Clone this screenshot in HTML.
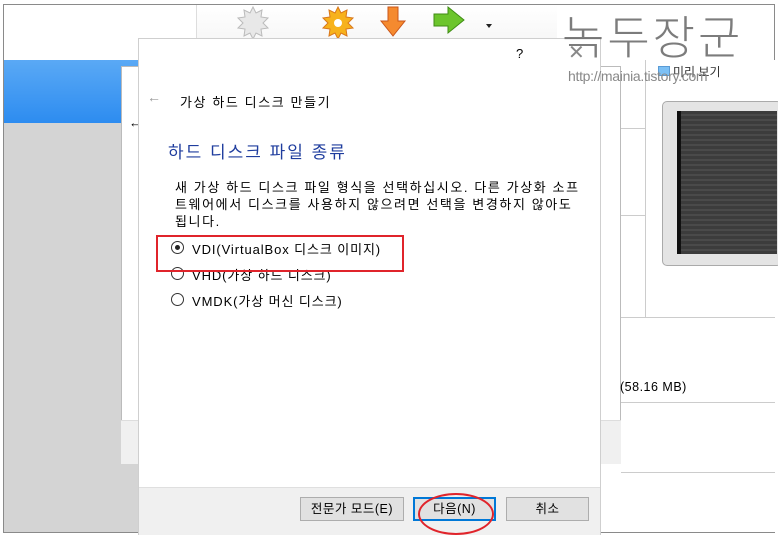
<!DOCTYPE html>
<html><head><meta charset="utf-8"><style>
*{margin:0;padding:0;box-sizing:border-box}
body{width:778px;height:539px;background:#fff;position:relative;overflow:hidden;font-family:"Liberation Sans","Noto Sans CJK KR","NanumGothic",sans-serif;color:#000}
.a{position:absolute}
.t{font-size:12.5px;white-space:nowrap}
.btn{position:absolute;height:24px;border:1px solid #adadad;background:#e1e1e1;font-size:12.5px;text-align:center;line-height:22px;letter-spacing:.5px}
.radio{position:absolute;width:13px;height:13px;border:1px solid #333;border-radius:50%;background:#fff}
</style></head><body>
<div class="a" style="left:3px;top:4px;width:772px;height:529px;border:1px solid #8a8a8a"></div>
<div class="a" style="left:196px;top:5px;width:1px;height:55px;background:#ddd"></div>
<div class="a" style="left:197px;top:5px;width:360px;height:55px;background:linear-gradient(#fff,#f2f2f2)"></div>
<svg class="a" style="left:235px;top:5px" width="36" height="36"><polygon points="18,2 21,8 27,5 26,12 33,13 28,18 33,23 26,24 27,31 21,28 18,34 15,28 9,31 10,24 3,23 8,18 3,13 10,12 9,5 15,8" fill="#e8e8e8" stroke="#bbb"/></svg>
<svg class="a" style="left:320px;top:5px" width="36" height="36"><polygon points="18,2 21,8 27,5 26,12 33,13 28,18 33,23 26,24 27,31 21,28 18,34 15,28 9,31 10,24 3,23 8,18 3,13 10,12 9,5 15,8" fill="#f7b21c" stroke="#d9771a"/><circle cx="18" cy="18" r="4" fill="#fff"/></svg>
<svg class="a" style="left:378px;top:5px" width="30" height="33"><path d="M10 2h10v14h7L15 31 3 16h7z" fill="#f58a2f" stroke="#c9551a"/></svg>
<svg class="a" style="left:432px;top:5px" width="36" height="30"><path d="M2 9h14V2l16 13-16 13v-7H2z" fill="#6cc52c" stroke="#3f8c14"/></svg>
<div class="a" style="left:486px;top:24px;border:3px solid transparent;border-top:4px solid #222"></div>
<div class="a" style="left:4px;top:60px;width:134px;height:63px;background:linear-gradient(#5aa9f5,#2d8cf0)"></div>
<div class="a" style="left:4px;top:123px;width:134px;height:409px;background:#d4d4d4"></div>
<div class="a" style="left:121px;top:66px;width:500px;height:398px;background:#fff;border:1px solid #bbb"></div>
<div class="a" style="left:121px;top:420px;width:500px;height:44px;background:#f0f0f0;border-top:1px solid #ddd"></div>
<div class="a t" style="left:129px;top:115px;font-size:13px">←</div>
<div class="a" style="left:621px;top:60px;width:154px;height:472px;background:#fff"></div>
<div class="a" style="left:645px;top:60px;width:1px;height:257px;background:#ccc"></div>
<div class="a" style="left:621px;top:128px;width:24px;height:1px;background:#ccc"></div>
<div class="a" style="left:621px;top:215px;width:24px;height:1px;background:#ccc"></div>
<div class="a" style="left:621px;top:317px;width:154px;height:1px;background:#ccc"></div>
<div class="a" style="left:621px;top:402px;width:154px;height:1px;background:#ccc"></div>
<div class="a" style="left:621px;top:472px;width:154px;height:1px;background:#ccc"></div>
<div class="a" style="left:662px;top:101px;width:120px;height:165px;background:#e4e4e4;border:1px solid #aaa;border-radius:5px"></div>
<div class="a" style="left:677px;top:111px;width:100px;height:143px;background:repeating-linear-gradient(#3c3c3c 0,#3c3c3c 3px,#4a4a4a 3px,#4a4a4a 5px);border-left:4px solid #111"></div>
<div class="a" style="left:658px;top:66px;width:12px;height:10px;background:#7cc0f5;border:1px solid #5a9bd5"></div>
<div class="a t" style="left:673px;top:63px;font-size:12px;color:#333">미리 보기</div>
<div class="a t" style="left:620px;top:380px;font-size:12.5px;letter-spacing:.5px">(58.16 MB)</div>
<!-- main dialog -->
<div class="a" style="left:138px;top:38px;width:463px;height:497px;background:#fff;border:1px solid #cfcfcf"></div>
<div class="a" style="left:139px;top:487px;width:461px;height:48px;background:#f0f0f0;border-top:1px solid #dfdfdf"></div>
<div class="a t" style="left:516px;top:46px;font-size:13px">?</div>
<div class="a t" style="left:147px;top:89px;color:#999;font-size:14px">←</div>
<div class="a t" style="left:180px;top:92px;font-size:13px;letter-spacing:1.6px">가상 하드 디스크 만들기</div>
<div class="a t" style="left:168px;top:138px;font-size:17px;color:#1f3d9e;letter-spacing:2px">하드 디스크 파일 종류</div>
<div class="a" style="left:175px;top:179px;font-size:13px;line-height:17px;width:430px;letter-spacing:1.6px;white-space:nowrap">새 가상 하드 디스크 파일 형식을 선택하십시오. 다른 가상화 소프<br>트웨어에서 디스크를 사용하지 않으려면 선택을 변경하지 않아도<br>됩니다.</div>
<div class="radio" style="left:171px;top:241px"></div><div class="a" style="left:175px;top:245px;width:5px;height:5px;border-radius:50%;background:#222"></div>
<div class="a t" style="left:192px;top:239px;font-size:13px;letter-spacing:.9px">VDI(VirtualBox 디스크 이미지)</div>
<div class="radio" style="left:171px;top:267px"></div>
<div class="a t" style="left:192px;top:265px;font-size:13px;letter-spacing:.9px">VHD(가상 하드 디스크)</div>
<div class="radio" style="left:171px;top:293px"></div>
<div class="a t" style="left:192px;top:291px;font-size:13px;letter-spacing:.9px">VMDK(가상 머신 디스크)</div>
<div class="a" style="left:156px;top:235px;width:248px;height:37px;border:2px solid #e0242b"></div>
<div class="btn" style="left:300px;top:497px;width:104px">전문가 모드(E)</div>
<div class="btn" style="left:413px;top:497px;width:83px;border:2px solid #0078d7;line-height:20px">다음(N)</div>
<div class="btn" style="left:506px;top:497px;width:83px">취소</div>
<div class="a" style="left:418px;top:493px;width:76px;height:42px;border:2px solid #e0242b;border-radius:50%"></div>
<!-- watermark over everything -->
<div class="a t" style="left:568px;top:40px;font-size:20px;color:#888">✕</div>
<div class="a" style="left:562px;top:2px;font-size:46px;color:#666;letter-spacing:3px;white-space:nowrap;opacity:.85;font-weight:300">녹두장군</div>
<div class="a" style="left:568px;top:68px;font-size:14px;color:#888;white-space:nowrap;letter-spacing:-0.3px">http://mainia.tistory.com</div>
</body></html>
